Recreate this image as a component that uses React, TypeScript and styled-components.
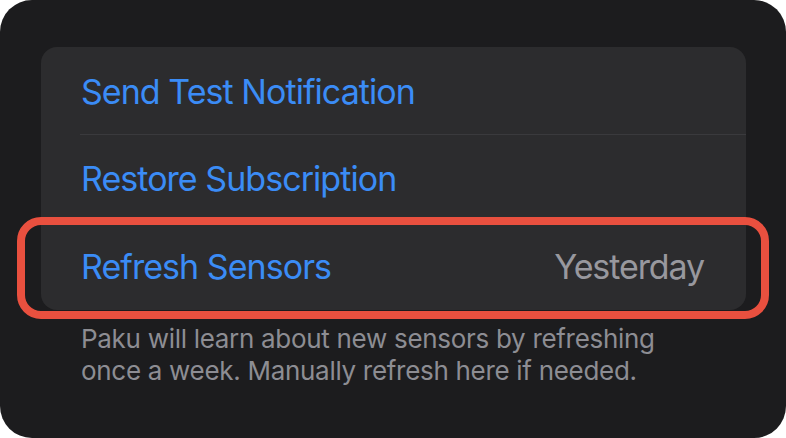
import React from "react";
import styled, { createGlobalStyle } from "styled-components";

const Global = createGlobalStyle`
  html, body {
    margin: 0;
    padding: 0;
    background: #ffffff;
  }
  body {
    font-family: Inter, "Noto Sans", "Liberation Sans", sans-serif;
    -webkit-font-smoothing: antialiased;
  }
`;

const Screen = styled.div`
  width: 786px;
  height: 438px;
  box-sizing: border-box;
  background: #1c1c1e;
  border-radius: 32px;
  padding: 47px 40px 0 41px;
  display: flex;
  flex-direction: column;
`;

const Group = styled.div`
  background: #2c2c2e;
  border-radius: 16px;
  display: flex;
  flex-direction: column;
`;

const Row = styled.div<{ $divider?: boolean }>`
  position: relative;
  height: 87.5px;
  padding: 3px 42px 0 40px;
  display: flex;
  align-items: center;
  justify-content: space-between;
  box-sizing: border-box;
  border-bottom: ${(p) => (p.$divider ? "1px solid #3a3a3d" : "none")};
  margin-left: ${(p) => (p.$divider ? "39px" : "0")};
  padding-left: ${(p) => (p.$divider ? "1px" : "40px")};
`;

const ActionLabel = styled.span`
  color: #3b8cf6;
  font-size: 34px;
  letter-spacing: -0.95px;
  line-height: 1;
`;

const Detail = styled.span`
  color: #98989e;
  font-size: 34px;
  letter-spacing: -1.1px;
  line-height: 1;
`;

const Highlight = styled.div`
  position: absolute;
  left: -24px;
  right: -23px;
  top: -5px;
  bottom: -9px;
  border: 8px solid #e9503f;
  border-radius: 24px;
  pointer-events: none;
`;

const Footer = styled.p`
  margin: 0;
  padding: 13px 0 0 40px;
  color: #8d8d93;
  font-size: 26px;
  line-height: 32px;
  letter-spacing: -0.3px;
`;

export default function App() {
  return (
    <>
      <Global />
      <Screen>
        <Group>
          <Row $divider>
            <ActionLabel>Send Test Notification</ActionLabel>
          </Row>
          <Row $divider>
            <ActionLabel>Restore Subscription</ActionLabel>
          </Row>
          <Row>
            <ActionLabel>Refresh Sensors</ActionLabel>
            <Detail>Yesterday</Detail>
            <Highlight />
          </Row>
        </Group>
        <Footer>
          Paku will learn about new sensors by refreshing
          <br />
          once a week. Manually refresh here if needed.
        </Footer>
      </Screen>
    </>
  );
}
